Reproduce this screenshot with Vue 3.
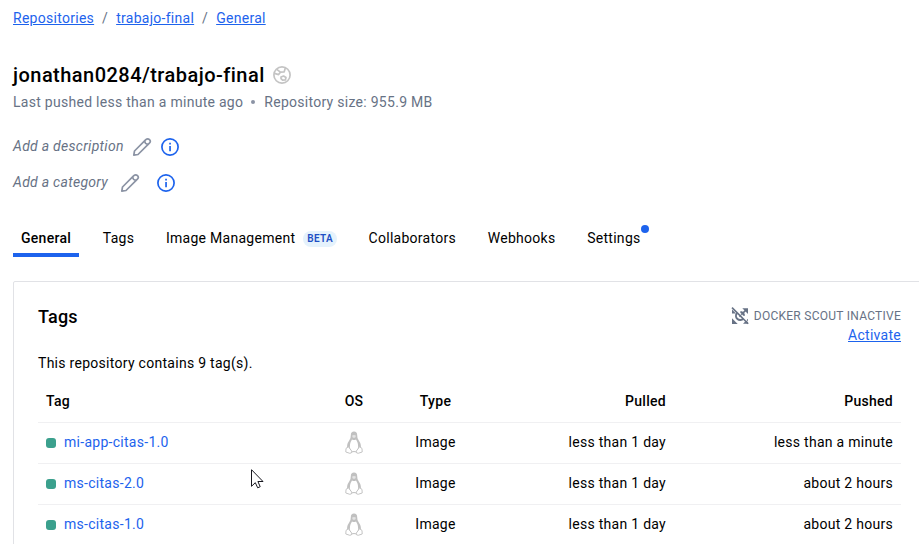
<script setup>
const crumbs = ['Repositories', 'trabajo-final', 'General']
const editable = [
  { label: 'Add a description', cls: 'description' },
  { label: 'Add a category', cls: 'category' },
]
const tabs = [
  { label: 'General', active: true },
  { label: 'Tags' },
  { label: 'Image Management', beta: true },
  { label: 'Collaborators' },
  { label: 'Webhooks' },
  { label: 'Settings', dot: true },
]
const rows = [
  { tag: 'mi-app-citas-1.0', type: 'Image', pulled: 'less than 1 day', pushed: 'less than a minute' },
  { tag: 'ms-citas-2.0', type: 'Image', pulled: 'less than 1 day', pushed: 'about 2 hours' },
  { tag: 'ms-citas-1.0', type: 'Image', pulled: 'less than 1 day', pushed: 'about 2 hours' },
]
</script>

<template>
  <main class="page">
    <nav class="crumbs">
      <template v-for="(c, i) in crumbs" :key="c">
        <span v-if="i" class="sep">/</span>
        <a class="link">{{ c }}</a>
      </template>
    </nav>

    <header>
      <div class="title-row">
        <h1>jonathan0284/trabajo-final</h1>
        <svg class="globe" viewBox="0 0 18 18" fill="none" stroke="#c4c4c4" stroke-width="1.7" stroke-linejoin="round">
          <circle cx="9" cy="9" r="8.1" />
          <path d="M1.4 7.4 L5.6 8.6 L7.4 6.2 L11.2 5.8 L12.4 1.8 M3.8 3.4 L7.4 6.2" />
          <path d="M8 11 L10.6 10 L13 11.4 L12.4 14 L9.6 14.2 L8 12.6Z" />
        </svg>
      </div>
      <p class="meta">Last pushed less than a minute ago<i class="bullet"></i>Repository size: 955.9 MB</p>
    </header>

    <div v-for="e in editable" :key="e.label" class="edit-row" :class="e.cls">
      <em>{{ e.label }}</em>
      <svg class="pencil" viewBox="0 0 20 20" fill="none" stroke="#8b93a4" stroke-width="1.7" stroke-linejoin="round">
        <path d="M1.8 18.2 L2.5 14 L13.8 2.7 Q15.7 .9 17.5 2.6 Q19.2 4.4 17.4 6.2 L6 17.5Z" />
        <path d="M12.6 4 Q13 7.2 16.2 7.4" />
      </svg>
      <svg class="info" viewBox="0 0 18 18">
        <circle cx="9" cy="9" r="8.1" fill="none" stroke="#1d63ed" stroke-width="1.7" />
        <path d="M8.2 4.8h1.7v1.7H8.2z M8.2 8h1.7v5.2H8.2z" fill="#1d63ed" />
      </svg>
    </div>

    <nav class="tabs">
      <a v-for="t in tabs" :key="t.label" class="tab" :class="{ active: t.active }">
        <span class="tab-text">{{ t.label }}<i v-if="t.dot" class="dot"></i></span>
        <span v-if="t.beta" class="beta">BETA</span>
      </a>
    </nav>

    <section class="panel">
      <div class="panel-head">
        <h2>Tags</h2>
        <div class="scout">
          <div class="scout-line">
            <svg class="scout-icon" viewBox="0 0 18 18">
              <g fill="#677285">
                <path d="M11.3 1.2H17V6.9Z M1 11.3V17H6.7Z M12 16.8H17V11.8Z M1 6.5V2.4L5 6.5Z" />
              </g>
              <g fill="none" stroke="#677285">
                <path d="M6 6.2 A4.1 4.1 0 1 0 12.3 11.6 M9.4 5 A4.1 4.1 0 0 1 13 8.8" stroke-width="2" />
                <path d="M14.6 3.4 L8.4 9.6" stroke-width="1.6" />
                <path d="M2.4 .2 L18 15.8" stroke="#fff" stroke-width="0.9" />
                <path d="M1 .6 L17.2 16.8" stroke-width="1.6" />
              </g>
            </svg>
            <span>DOCKER SCOUT INACTIVE</span>
          </div>
          <a class="link">Activate</a>
        </div>
      </div>
      <p class="count">This repository contains 9 tag(s).</p>

      <div class="table">
        <div class="row head">
          <span>Tag</span><span class="mid">OS</span><span class="mid">Type</span><span class="end">Pulled</span><span class="end">Pushed</span>
        </div>
        <div v-for="r in rows" :key="r.tag" class="row">
          <span class="tag"><i class="status"></i><a>{{ r.tag }}</a></span>
          <span class="mid os">
            <svg class="tux" viewBox="0 0 18 23">
              <path d="M5.8 4.2Q5.8.6 9 .6T12.2 4.2Q12 7 13.8 9.6Q17 14 15.4 18.5H2.6Q1 14 4.2 9.6Q6 7 5.8 4.2Z" fill="#c0c0c0" />
              <path d="M7 8.4 Q9 9.8 11 8.4 Q14 13 12.8 18 Q11 20.5 9 20.4 Q7 20.5 5.2 18 Q4 13 7 8.4Z" fill="#fff" />
              <path d="M7.2 4.4 Q9 3.4 10.8 4.4 L10.5 6.2 Q9 7.3 7.5 6.2Z" fill="#e4e4e4" />
              <path d="M1 17.4 L3.4 15.7 L6.8 20.2 Q7 22.4 4.8 22.3 L.8 21Z M17 17.4 L14.6 15.7 L11.2 20.2 Q11 22.4 13.2 22.3 L17.2 21Z" fill="#fff" stroke="#c4c4c4" stroke-width="1" />
              <path d="M6.5 21 Q9 20 11.5 21" fill="none" stroke="#c0c0c0" />
            </svg>
          </span>
          <span class="mid">{{ r.type }}</span>
          <span class="end">{{ r.pulled }}</span>
          <span class="end">{{ r.pushed }}</span>
        </div>
      </div>
    </section>

    <svg class="cursor" viewBox="0 0 13 20">
      <path d="M.5 .7 V17.3 L4.3 13.7 L6.7 18.8 L9.2 17.7 L6.9 12.5 H12Z" fill="#fff" stroke="#17171f" stroke-width="1" />
    </svg>
  </main>
</template>

<style>
html, body { margin: 0; background: #fff; overflow: hidden; }
</style>

<style scoped>
* { box-sizing: border-box; }
.page {
  position: relative;
  width: 919px;
  height: 544px;
  padding: 8px 0 0 13px;
  overflow: hidden;
  background: #fff;
  color: #000;
  font: 14px/20px Roboto, sans-serif;
  letter-spacing: 0.28px;
  white-space: nowrap;
}
h1, h2, p { margin: 0; }
svg { display: block; flex: none; }
.crumbs { display: flex; height: 20px; }
.sep { width: 22px; text-align: center; color: #677285; }
.link { color: #1d63ed; text-decoration: underline; }
.title-row { display: flex; align-items: center; height: 28px; margin-top: 33px; }
h1 { font-size: 20px; line-height: 28px; font-weight: 500; letter-spacing: 0.46px; }
.globe { width: 18px; height: 18px; margin-left: 8px; }
.meta { display: flex; align-items: center; height: 20px; margin-top: 3px; color: #677285; }
.bullet { width: 4px; height: 4px; margin: 0 9px 0 8px; border-radius: 50%; background: #8b93a4; }
.edit-row { display: flex; align-items: center; height: 20px; color: #677285; }
.edit-row em { line-height: 20px; }
.description { margin-top: 24px; }
.category { margin-top: 16px; }
.pencil { width: 20px; height: 20px; margin: 2px 0 0 8px; }
.info { width: 18px; height: 18px; margin: 2px 0 0 9px; }
.category .pencil { margin-left: 12px; }
.category .info { margin-left: 17px; }
.tabs { display: flex; gap: 15.7px; height: 37px; margin-top: 28px; }
.tab { display: flex; align-items: flex-start; height: 37px; padding: 8px 8px 0; }
.active { font-weight: 500; border-bottom: 4px solid #1d63ed; }
.tab-text { position: relative; }
.dot { position: absolute; top: -3px; right: -8px; width: 8px; height: 8px; border-radius: 50%; background: #1d63ed; }
.beta {
  height: 16px;
  margin: 3px 0 0 8px;
  padding: 0 4px;
  border-radius: 8px;
  background: #e5f2fc;
  color: #1d4fc4;
  font-size: 10px;
  line-height: 16px;
  font-weight: 600;
}
.panel {
  width: 930px;
  height: 300px;
  margin-top: 24px;
  padding: 0 0 0 24px;
  border: 1px solid #e1e2e6;
  border-radius: 2px;
}
.panel-head { display: flex; justify-content: space-between; width: 863px; height: 71px; padding-top: 23px; }
h2 { font-size: 18px; line-height: 24px; font-weight: 500; letter-spacing: 0.2px; }
.scout { display: flex; flex-direction: column; align-items: flex-end; }
.scout-line { display: flex; align-items: center; height: 20px; padding-top: 2px; color: #677285; font-size: 12px; letter-spacing: 0.26px; }
.scout-icon { width: 18px; height: 18px; margin-right: 5px; }
.count { height: 20px; }
.table { width: 863px; margin-top: 8px; }
.row {
  display: grid;
  grid-template-columns: 284px 64px 99px 189px 227px;
  align-items: center;
  height: 41px;
  padding-bottom: 2px;
  border-bottom: 1px solid #f0f0f2;
}
.row > span:first-child { padding-left: 8px; }
.row.head { height: 42px; font-weight: 500; }
.mid { text-align: center; }
.end { text-align: right; padding-right: 8px; }
.tag { display: flex; align-items: center; color: #1d63ed; }
.status { width: 10px; height: 10px; margin: 1px 8px 0 0; border-radius: 3px; background: #3ba08d; }
.os { padding-top: 1px; }
.tux { width: 18px; height: 23px; margin: 0 auto; }
.cursor { position: absolute; left: 251px; top: 469px; width: 13px; height: 20px; }
</style>
